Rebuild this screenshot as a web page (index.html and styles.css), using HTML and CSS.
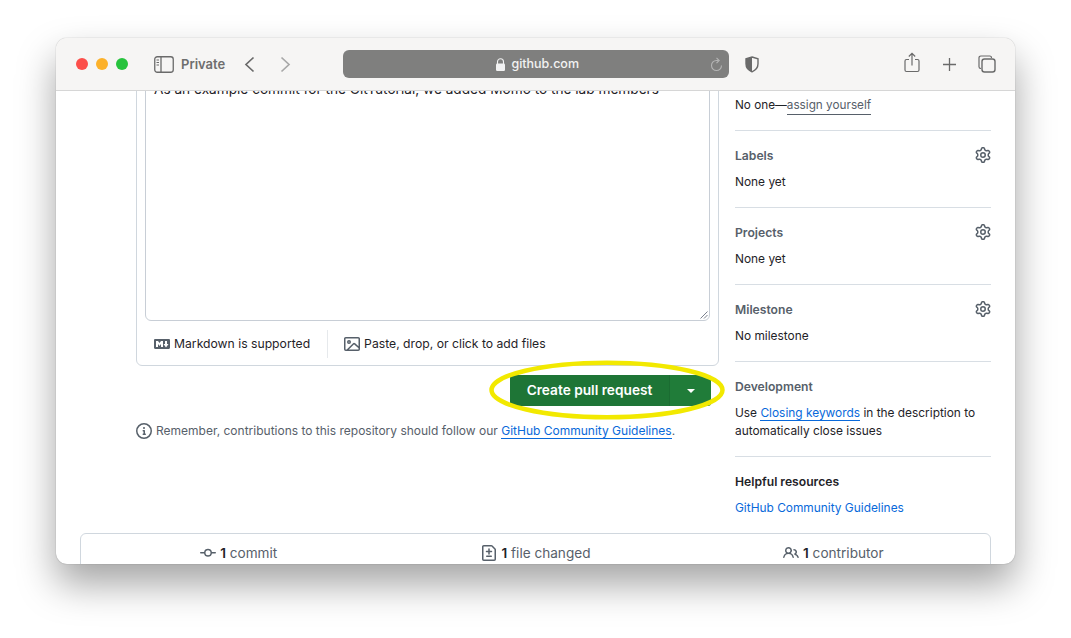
FILE: index.html
```html
<!DOCTYPE html>
<html lang="en">

<head>
    <meta charset="UTF-8">
    <meta name="viewport" content="width=device-width, initial-scale=1.0">
    <title>Create pull request</title>

    <link rel="stylesheet" href="styles.css">
</head>

<body>

    <svg class="sprite" xmlns="http://www.w3.org/2000/svg">
        <symbol id="gear" viewBox="0 0 16 16">
            <path fill="currentColor"
                d="M8 0a8.2 8.2 0 0 1 .701.031C9.444.095 9.99.645 10.16 1.29l.288 1.107c.018.066.079.158.212.224.231.114.454.243.668.386.123.082.233.09.299.071l1.103-.303c.644-.176 1.392.021 1.82.63.27.385.506.792.704 1.218.315.675.111 1.422-.364 1.891l-.814.806c-.049.048-.098.147-.088.294.016.257.016.515 0 .772-.01.147.038.246.088.294l.814.806c.475.469.679 1.216.364 1.891a7.977 7.977 0 0 1-.704 1.217c-.428.61-1.176.807-1.82.63l-1.102-.302c-.067-.019-.177-.011-.3.071a5.909 5.909 0 0 1-.668.386c-.133.066-.194.158-.211.224l-.29 1.106c-.168.646-.715 1.196-1.458 1.26a8.006 8.006 0 0 1-1.402 0c-.743-.064-1.289-.614-1.458-1.26l-.289-1.106c-.018-.066-.079-.158-.212-.224a5.738 5.738 0 0 1-.668-.386c-.123-.082-.233-.09-.299-.071l-1.103.303c-.644.176-1.392-.021-1.82-.63a8.12 8.12 0 0 1-.704-1.218c-.315-.675-.111-1.422.363-1.891l.815-.806c.05-.048.098-.147.088-.294a6.214 6.214 0 0 1 0-.772c.01-.147-.038-.246-.088-.294l-.815-.806C.635 6.045.431 5.298.746 4.623a7.92 7.92 0 0 1 .704-1.217c.428-.61 1.176-.807 1.82-.63l1.102.302c.067.019.177.011.3-.071.214-.143.437-.272.668-.386.133-.066.194-.158.211-.224l.29-1.106C6.009.645 6.556.095 7.299.03 7.53.01 7.764 0 8 0Zm-.571 1.525c-.036.003-.108.036-.137.146l-.289 1.105c-.147.561-.549.967-.998 1.189-.173.086-.34.183-.5.29-.417.278-.97.423-1.529.27l-1.103-.303c-.109-.03-.175.016-.195.045-.22.312-.412.644-.573.99-.014.031-.021.11.059.19l.815.806c.411.406.562.957.53 1.456a4.709 4.709 0 0 0 0 .582c.032.499-.119 1.05-.53 1.456l-.815.806c-.081.08-.073.159-.059.19.162.346.353.677.573.989.02.03.085.076.195.046l1.102-.303c.56-.153 1.113-.008 1.53.27.161.107.328.204.501.29.447.222.85.629.997 1.189l.289 1.105c.029.109.101.143.137.146a6.6 6.6 0 0 0 1.142 0c.036-.003.108-.036.137-.146l.289-1.105c.147-.561.549-.967.998-1.189.173-.086.34-.183.5-.29.417-.278.97-.423 1.529-.27l1.103.303c.109.029.175-.016.195-.045.22-.313.411-.644.573-.99.014-.031.021-.11-.059-.19l-.815-.806c-.411-.406-.562-.957-.53-1.456a4.709 4.709 0 0 0 0-.582c-.032-.499.119-1.05.53-1.456l.815-.806c.081-.08.073-.159.059-.19a6.464 6.464 0 0 0-.573-.989c-.02-.03-.085-.076-.195-.046l-1.102.303c-.56.153-1.113.008-1.53-.27a4.44 4.44 0 0 0-.501-.29c-.447-.222-.85-.629-.997-1.189l-.289-1.105c-.029-.11-.101-.143-.137-.146a6.6 6.6 0 0 0-1.142 0ZM11 8a3 3 0 1 1-6 0 3 3 0 0 1 6 0ZM9.5 8a1.5 1.5 0 1 0-3.001.001A1.5 1.5 0 0 0 9.5 8Z">
            </path>
        </symbol>
    </svg>

    <section class="window">
        <header class="toolbar">
            <div class="lights">
                <span class="light light-red"></span>
                <span class="light light-yellow"></span>
                <span class="light light-green"></span>
            </div>

            <svg class="tb-sidebar" viewBox="0 0 20 17" width="20" height="17">
                <rect x="0.75" y="0.75" width="18.5" height="15.5" rx="2.5" fill="none" stroke="currentColor" stroke-width="1.3"></rect>
                <path d="M7 1v15" stroke="currentColor" stroke-width="1.3"></path>
                <path d="M2.5 4H5M2.5 6.5H5M2.5 9H5" stroke="currentColor" stroke-width="1"></path>
            </svg>
            <span class="private">Private</span>

            <svg class="tb-back" viewBox="0 0 11 17" width="11" height="17">
                <path d="M9.5 1.5L2 8.5l7.5 7" fill="none" stroke="currentColor" stroke-width="1.7"></path>
            </svg>
            <svg class="tb-forward" viewBox="0 0 11 17" width="11" height="17">
                <path d="M1.5 1.5L9 8.5l-7.5 7" fill="none" stroke="currentColor" stroke-width="1.7"></path>
            </svg>

            <div class="urlbar">
                <div class="url">
                    <svg viewBox="0 0 9 13" width="9" height="13">
                        <path d="M1.5 6V3.8a3 3 0 0 1 6 0V6" fill="none" stroke="currentColor" stroke-width="1.1"></path>
                        <rect x="0" y="5.5" width="9" height="7.5" rx="1.2" fill="currentColor"></rect>
                    </svg>
                    <span>github.com</span>
                </div>
                <svg class="reload" viewBox="0 0 13 15" width="13" height="15">
                    <path d="M11.5 8.5a5 5 0 1 1-5-5h2" fill="none" stroke="currentColor" stroke-width="1.1"></path>
                    <path d="M6.5 0.8l2.7 2.7-2.7 2.7" fill="none" stroke="currentColor" stroke-width="1.1"></path>
                </svg>
            </div>

            <svg class="tb-shield" viewBox="0 0 14 17" width="14" height="17">
                <path d="M7 1l6 1.8v5c0 4-2.6 6.6-6 8-3.4-1.4-6-4-6-8v-5z" fill="none" stroke="currentColor" stroke-width="1.4"></path>
                <path d="M7 1L1 2.8v5c0 4 2.6 6.6 6 8z" fill="currentColor"></path>
            </svg>

            <svg class="tb-share" viewBox="0 0 16 21" width="16" height="21">
                <path d="M5 7.5H2.5A1.5 1.5 0 0 0 1 9v9a1.5 1.5 0 0 0 1.5 1.5h11A1.5 1.5 0 0 0 15 18V9a1.5 1.5 0 0 0-1.5-1.5H11" fill="none" stroke="currentColor" stroke-width="1.2"></path>
                <path d="M8 13.5v-12M4.8 4.5L8 1.3l3.2 3.2" fill="none" stroke="currentColor" stroke-width="1.2"></path>
            </svg>
            <svg class="tb-plus" viewBox="0 0 15 15" width="15" height="15">
                <path d="M7.5 1v13M1 7.5h13" stroke="currentColor" stroke-width="1.3"></path>
            </svg>
            <svg class="tb-tabs" viewBox="0 0 18 18" width="18" height="18">
                <path d="M3 13.5h-.2A1.8 1.8 0 0 1 1 11.7V2.8A1.8 1.8 0 0 1 2.8 1h8.9a1.8 1.8 0 0 1 1.8 1.8V3" fill="none" stroke="currentColor" stroke-width="1.2"></path>
                <rect x="4" y="4" width="13" height="13" rx="2.5" fill="none" stroke="currentColor" stroke-width="1.4"></rect>
            </svg>
        </header>

        <div class="page">
            <div class="columns">
                <main class="main">
                    <div class="composer">
                        <div class="textarea">
                            <p>As an example commit for the GitTutorial, we added Momo to the lab members</p>
                            <svg class="resize" viewBox="0 0 8 8" width="8" height="8">
                                <path d="M.5 7.5l7-7M4 7.5L7.5 4" stroke="#6b7280" stroke-width="0.9"></path>
                            </svg>
                        </div>
                        <div class="composer-foot">
                            <span class="foot-item foot-md">
                                <svg viewBox="0 0 16 16" width="16" height="16">
                                    <path fill="currentColor"
                                        d="M14.85 3c.63 0 1.15.52 1.14 1.15v7.7c0 .63-.51 1.15-1.15 1.15H1.15C.52 13 0 12.48 0 11.84V4.15C0 3.52.52 3 1.15 3ZM9 11V5H7L5.5 7 4 5H2v6h2V8l1.5 1.92L7 8v3Zm2.99.5L14.5 8H13V5h-2v3H9.5Z">
                                    </path>
                                </svg>
                                Markdown is supported
                            </span>
                            <span class="foot-item foot-files">
                                <svg viewBox="0 0 16 16" width="16" height="16">
                                    <path fill="currentColor"
                                        d="M16 13.25A1.75 1.75 0 0 1 14.25 15H1.75A1.75 1.75 0 0 1 0 13.25V2.75C0 1.784.784 1 1.75 1h12.5c.966 0 1.75.784 1.75 1.75ZM1.75 2.5a.25.25 0 0 0-.25.25v10.5c0 .138.112.25.25.25h.94l.03-.03 6.077-6.078a1.75 1.75 0 0 1 2.412-.06L14.5 10.31V2.75a.25.25 0 0 0-.25-.25Zm12.5 11a.25.25 0 0 0 .25-.25v-.917l-4.298-3.889a.25.25 0 0 0-.344.009L4.81 13.5ZM7 6a2 2 0 1 1-3.999.001A2 2 0 0 1 7 6ZM5.5 6a.5.5 0 1 0-1 0 .5.5 0 0 0 1 0Z">
                                    </path>
                                </svg>
                                Paste, drop, or click to add files
                            </span>
                        </div>
                    </div>

                    <div class="actions">
                        <button class="btn-create" type="button">Create pull request</button>
                        <button class="btn-caret" type="button" aria-label="More options"><span class="caret"></span></button>
                    </div>

                    <p class="notice">
                        <svg viewBox="0 0 16 16" width="16" height="16">
                            <path fill="currentColor"
                                d="M0 8a8 8 0 1 1 16 0A8 8 0 0 1 0 8Zm8-6.5a6.5 6.5 0 1 0 0 13 6.5 6.5 0 0 0 0-13ZM6.5 7.75A.75.75 0 0 1 7.25 7h1a.75.75 0 0 1 .75.75v2.75h.25a.75.75 0 0 1 0 1.5h-2a.75.75 0 0 1 0-1.5h.25v-2h-.25a.75.75 0 0 1-.75-.75ZM8 6a1 1 0 1 1 0-2 1 1 0 0 1 0 2Z">
                            </path>
                        </svg>
                        <span>Remember, contributions to this repository should follow our <a class="link-line" href="#">GitHub Community Guidelines</a>.</span>
                    </p>
                </main>

                <aside class="sidebar">
                    <p class="assignee">No one—<a class="assign" href="#">assign yourself</a></p>

                    <div class="side-section">
                        <div class="side-head">
                            <h3>Labels</h3>
                            <svg class="gear" width="16" height="16"><use href="#gear"></use></svg>
                        </div>
                        <p>None yet</p>
                    </div>

                    <div class="side-section">
                        <div class="side-head">
                            <h3>Projects</h3>
                            <svg class="gear" width="16" height="16"><use href="#gear"></use></svg>
                        </div>
                        <p>None yet</p>
                    </div>

                    <div class="side-section">
                        <div class="side-head">
                            <h3>Milestone</h3>
                            <svg class="gear" width="16" height="16"><use href="#gear"></use></svg>
                        </div>
                        <p>No milestone</p>
                    </div>

                    <div class="side-section">
                        <div class="side-head">
                            <h3>Development</h3>
                        </div>
                        <p>Use <a class="link-line" href="#">Closing keywords</a> in the description to automatically close issues</p>
                    </div>

                    <div class="side-section">
                        <div class="side-head">
                            <h3 class="dark">Helpful resources</h3>
                        </div>
                        <p><a href="#">GitHub Community Guidelines</a></p>
                    </div>
                </aside>
            </div>

            <div class="summary">
                <span class="summary-item">
                    <svg viewBox="0 0 16 16" width="16" height="16">
                        <path fill="currentColor"
                            d="M11.93 8.5a4.002 4.002 0 0 1-7.86 0H.75a.75.75 0 0 1 0-1.5h3.32a4.002 4.002 0 0 1 7.86 0h3.32a.75.75 0 0 1 0 1.5Zm-1.43-.75a2.5 2.5 0 1 0-5 0 2.5 2.5 0 0 0 5 0Z">
                        </path>
                    </svg>
                    <span><strong>1</strong> commit</span>
                </span>
                <span class="summary-item">
                    <svg viewBox="0 0 16 16" width="16" height="16">
                        <path fill="currentColor"
                            d="M1 1.75C1 .784 1.784 0 2.75 0h7.586c.464 0 .909.184 1.237.513l2.914 2.914c.329.328.513.773.513 1.237v9.586A1.75 1.75 0 0 1 13.25 16H2.75A1.75 1.75 0 0 1 1 14.25Zm1.75-.25a.25.25 0 0 0-.25.25v12.5c0 .138.112.25.25.25h10.5a.25.25 0 0 0 .25-.25V4.664a.25.25 0 0 0-.073-.177l-2.914-2.914a.25.25 0 0 0-.177-.073ZM8 3.25a.75.75 0 0 1 .75.75v1.75h1.75a.75.75 0 0 1 0 1.5H8.75V9a.75.75 0 0 1-1.5 0V7.25H5.5a.75.75 0 0 1 0-1.5h1.75V4A.75.75 0 0 1 8 3.25Zm-3 8a.75.75 0 0 1 .75-.75h4.5a.75.75 0 0 1 0 1.5h-4.5a.75.75 0 0 1-.75-.75Z">
                        </path>
                    </svg>
                    <span><strong>1</strong> file changed</span>
                </span>
                <span class="summary-item">
                    <svg viewBox="0 0 16 16" width="16" height="16">
                        <path fill="currentColor"
                            d="M2 5.5a3.5 3.5 0 1 1 5.898 2.549 5.508 5.508 0 0 1 3.034 4.084.75.75 0 1 1-1.482.235 4 4 0 0 0-7.9 0 .75.75 0 0 1-1.482-.236A5.507 5.507 0 0 1 3.102 8.05 3.493 3.493 0 0 1 2 5.5ZM11 4a3.001 3.001 0 0 1 2.22 5.018 5.01 5.01 0 0 1 2.56 3.012.749.749 0 0 1-.885.954.752.752 0 0 1-.549-.514 3.507 3.507 0 0 0-2.522-2.372.75.75 0 0 1-.574-.73v-.352a.75.75 0 0 1 .416-.672A1.5 1.5 0 0 0 11 5.5.75.75 0 0 1 11 4Zm-5.5-.5a2 2 0 1 0-.001 3.999A2 2 0 0 0 5.5 3.5Z">
                        </path>
                    </svg>
                    <span><strong>1</strong> contributor</span>
                </span>
            </div>
        </div>

        <svg class="highlight" viewBox="0 0 240 64" width="240" height="64">
            <ellipse cx="120" cy="32" rx="115.5" ry="27.3" fill="none" stroke="#f2e900" stroke-width="4.5"></ellipse>
        </svg>
    </section>

</body>

</html>
```

FILE: styles.css
```css
*,
*::before,
*::after {
    box-sizing: border-box;
}

body {
    margin: 0;
    padding: 38px 56px 0;
    height: 638px;
    overflow: hidden;
    background-color: #fff;
    font-family: Inter, "Liberation Sans", sans-serif;
    font-size: 11.9px;
    line-height: 18px;
    color: #1f2328;
}

p {
    margin: 0;
}

a {
    color: #0969da;
    text-decoration: none;
}

.sprite {
    display: none;
}

.window {
    position: relative;
    width: 959px;
    height: 526px;
    display: flex;
    flex-direction: column;
    background-color: #fff;
    border-radius: 11px;
    overflow: hidden;
    box-shadow: 0 0 1px rgba(0, 0, 0, 0.45), 0 20px 38px rgba(0, 0, 0, 0.36);
}

/* safari toolbar */
.toolbar {
    flex: none;
    height: 53px;
    display: flex;
    align-items: center;
    padding-left: 20px;
    background-color: #f6f5f4;
    border-bottom: 1px solid #d6d6d6;
    color: #6a6a6a;
}

.lights {
    display: flex;
    gap: 8px;
}

.light {
    width: 12px;
    height: 12px;
    border-radius: 50%;
}

.light-red {
    background-color: #fc4f4a;
}

.light-yellow {
    background-color: #fcb12a;
}

.light-green {
    background-color: #27c33d;
}

.tb-sidebar {
    margin-left: 26px;
}

.private {
    margin-left: 7px;
    font-size: 13px;
    font-weight: 600;
    color: #6e6e6e;
}

.tb-back {
    margin-left: 19px;
}

.tb-forward {
    margin-left: 25px;
    color: #a8a8a8;
}

.urlbar {
    margin-left: 52px;
    width: 386px;
    height: 28px;
    display: flex;
    align-items: center;
    justify-content: center;
    position: relative;
    background-color: #7f7f7e;
    border-radius: 6px;
    color: #f2f2f2;
}

.url {
    display: flex;
    align-items: center;
    gap: 6px;
    margin-left: 3px;
    font-size: 12.5px;
    font-weight: 500;
}

.reload {
    position: absolute;
    right: 6px;
    top: 7px;
    color: #b4b4b4;
}

.tb-shield {
    margin-left: 16px;
}

.tb-share {
    margin-left: 145px;
    margin-bottom: 3px;
}

.tb-plus {
    margin-left: 22px;
}

.tb-tabs {
    margin-left: 21px;
}

/* github page */
.page {
    flex: 1;
    min-height: 0;
    overflow: hidden;
}

.columns {
    display: flex;
    height: 442px;
    padding-left: 80px;
}

.main {
    width: 583px;
}

.composer {
    margin-top: -29px;
    height: 304px;
    display: flex;
    flex-direction: column;
    border: 1px solid #d0d7de;
    border-radius: 6px;
}

.textarea {
    position: relative;
    flex: 1;
    margin: 8px 8px 0;
    padding: 8px;
    background-color: #fff;
    border: 1px solid #c8ced6;
    border-radius: 6px;
    font-size: 13.65px;
    color: #1f2328;
}

.resize {
    position: absolute;
    right: 1px;
    bottom: 1px;
}

.composer-foot {
    flex: none;
    height: 44px;
    display: flex;
    align-items: center;
    padding: 2px 8px 0;
    font-size: 12.2px;
    color: #1f2328;
}

.foot-item {
    display: flex;
    align-items: center;
    gap: 4px;
    height: 28px;
}

.foot-item svg {
    color: #57606a;
}

.foot-md {
    padding: 0 17px 0 9px;
    border-right: 1px solid #e6e9ec;
}

.foot-files {
    padding-left: 16px;
}

.actions {
    display: flex;
    justify-content: flex-end;
    margin: 9px 8px 0 0;
    height: 31px;
}

.actions button {
    border: 0;
    margin: 0;
    color: #fff;
    font-family: inherit;
    cursor: pointer;
}

.actions .btn-create {
    width: 160px;
    padding: 0 0 2px;
    background-color: #1e7536;
    border-right: 1px solid #1b6c32;
    border-radius: 3px 0 0 3px;
    font-size: 13.7px;
    font-weight: 600;
}

.btn-caret {
    width: 41px;
    padding: 0;
    background-color: #207c39;
    border-radius: 0 3px 3px 0;
}

.caret {
    display: block;
    margin: 0 auto;
    width: 0;
    height: 0;
    border-top: 4px solid #fff;
    border-left: 4px solid transparent;
    border-right: 4px solid transparent;
}

.notice {
    margin-top: 16px;
    display: flex;
    align-items: center;
    gap: 4px;
    white-space: nowrap;
    font-size: 12px;
    color: #57606a;
}

.notice svg {
    flex: none;
}

.link-line {
    border-bottom: 1px solid #0969da;
}

.sidebar {
    width: 256px;
    margin-left: 16px;
    padding-top: 5px;
}

.assignee {
    padding-bottom: 16px;
    font-size: 11.75px;
}

.assign {
    color: #57606a;
    border-bottom: 1px solid #57606a;
    padding-bottom: 2px;
}

.side-section {
    padding: 16px 0 16px;
    border-top: 1px solid #d8dee4;
}

.side-head {
    display: flex;
    align-items: center;
    justify-content: space-between;
    height: 18px;
    margin-bottom: 8px;
}

.side-head h3 {
    margin: 0;
    font-size: 12.15px;
    font-weight: 600;
    color: #57606a;
}

.side-head h3.dark {
    color: #1f2328;
}

.gear {
    color: #57606a;
    margin-top: -2px;
}

.summary {
    margin: 0 24px;
    height: 60px;
    display: grid;
    grid-template-columns: repeat(3, 1fr);
    padding: 10px 8px 0 9px;
    border: 1px solid #d0d7de;
    border-radius: 6px;
    font-size: 13.6px;
    color: #57606a;
}

.summary-item {
    display: flex;
    justify-content: center;
    align-items: center;
    gap: 4px;
    height: 18px;
}

.summary-item strong {
    color: #1f2328;
    font-weight: 600;
}

.highlight {
    position: absolute;
    left: 431px;
    top: 320px;
    pointer-events: none;
}
```
